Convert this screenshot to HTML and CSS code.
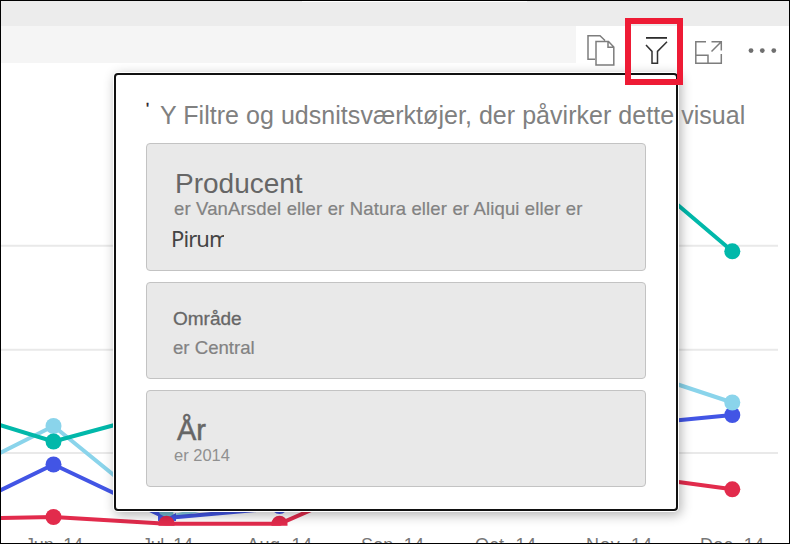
FILE: index.html
```
<!DOCTYPE html>
<html lang="da">
<head>
<meta charset="utf-8">
<title>Filtre</title>
<link rel="stylesheet" href="styles.css">
</head>
<body>
<div class="report">
  <div class="strip"><i></i></div>
  <header class="toolbar">
    <div class="title-area"></div>
    <svg class="icons" width="214" height="46" viewBox="576 26 214 46" fill="none">
      <g stroke="#7d7d7d" stroke-width="1.5">
        <path d="M595 59.3H588V35.7H600L605 40.500M596 41.500H608.500L613.800 47V65H596ZM608 41.500V47.300H613.800"/>
        <path d="M706 41.800H695.800V63.200H721.300V54M708 63V55.300H696M711.500 41.800H721.300V50.500M711.500 51.500L721 42"/>
      </g>
      <path stroke="#222" stroke-width="1.7" d="M646 37.900H667"/>
      <path stroke="#333" stroke-width="1.500" d="M646 45L652 51.400V63.200H657.500V51.400L667 41.800"/>
      <g fill="#6f6f6f"><circle cx="751" cy="50.600" r="2.400"/><circle cx="762.300" cy="50.600" r="2.400"/><circle cx="773.800" cy="50.600" r="2.400"/></g>
    </svg>
  </header>
  <svg class="chart" width="788" height="480" viewBox="1 63 788 480">
    <g stroke="#e9e9e9" stroke-width="2"><path d="M0 245.700H778M0 349.700H778M0 453H778"/></g>
    <g fill="none" stroke-width="4" stroke-linejoin="round">
      <path stroke="#8ad4eb" d="M0 453L53.500 426L166.500 518L280 490M619 365L732.300 402.500"/>
      <path stroke="#4255e5" d="M0 490.500L53.500 464.500L166.500 518L280 508M619 426L732.300 415"/>
      <path stroke="#01b8aa" d="M0 425L53.500 441.500L166.500 411M619 155L732.300 251.300"/>
      <path stroke="#e22b4c" d="M0 518L53.500 517L166.500 523.700H280L393 474M619 474L732.300 489.300"/>
    </g>
    <circle cx="732.300" cy="415" r="8" fill="#4255e5"/>
    <circle cx="53.500" cy="426" r="8" fill="#8ad4eb"/><circle cx="732.300" cy="402.500" r="8" fill="#8ad4eb"/>
    <circle cx="166.500" cy="513" r="7" fill="#72bed2"/>
    <path d="M158 513L167 518L176 513V521H158Z" fill="#4255e5"/>
    <circle cx="53.500" cy="464.500" r="8" fill="#4255e5"/><circle cx="279.500" cy="506" r="8" fill="#4255e5"/>
    <circle cx="53.500" cy="441.500" r="8" fill="#01b8aa"/><circle cx="732.300" cy="251.300" r="8" fill="#01b8aa"/>
    <g fill="#e22b4c"><circle cx="53.500" cy="517" r="8"/><path d="M158.500 525.700V523.700a8 8 0 0 1 16 0V525.700ZM271.500 525.700V523.700a8 8 0 0 1 16 0V525.700Z"/><circle cx="732.300" cy="489.300" r="8"/></g>
    <g class="months">
      <text x="25" y="551" textLength="58">Jun. 14</text>
      <text x="142" y="551" textLength="51">Jul. 14</text>
      <text x="247" y="551" textLength="65">Aug. 14</text>
      <text x="361" y="551" textLength="63">Sep. 14</text>
      <text x="475" y="551" textLength="61">Oct. 14</text>
      <text x="586" y="551" textLength="66">Nov. 14</text>
      <text x="700" y="551" textLength="64">Dec. 14</text>
    </g>
  </svg>
  <section class="popup">
    <h1><span class="tick">'</span><span class="heading">Y Filtre og udsnitsværktøjer, der påvirker dette visual</span></h1>
    <article class="card producer">
      <h2>Producent</h2>
      <p>er VanArsdel eller er Natura eller er Aliqui eller er</p>
      <div class="clipped">Pirum</div>
    </article>
    <article class="card region"><h2>Område</h2><p>er Central</p></article>
    <article class="card year"><h2>År</h2><p>er 2014</p></article>
  </section>
  <div class="highlight"></div>
</div>
</body>
</html>
```

FILE: styles.css
```
* { box-sizing: border-box; }
body { margin: 0; font-family: "Liberation Sans", Arial, sans-serif; overflow: hidden; }
h1, h2, p { margin: 0; font-weight: 400; white-space: nowrap; }
.report { position: relative; width: 790px; height: 544px; border: 1px solid #000; background: #fff; overflow: hidden; }
.strip { height: 25px; background: #ececec; }
.strip i { display: block; width: 225px; height: 1px; margin-left: 301px; background: #fff; }
.toolbar { display: flex; height: 37px; }
.title-area { flex: none; width: 575px; background: #f5f5f5; }
.icons { flex: none; display: block; }
.chart { display: block; }
.months { font-size: 18px; fill: #777; }
.popup {
  position: absolute; left: 113px; top: 72px; width: 564px; height: 438px;
  padding: 26px 30px; border: 2px solid #111; border-radius: 4px; background: #fff;
  box-shadow: 0 0 0 1px #fff, 2px 3px 12px 1px rgba(0,0,0,.3);
}
.popup h1 { display: flex; height: 42px; line-height: 29px; font-size: 25px; color: #808080; }
.tick { flex: none; width: 14px; font-size: 16px; line-height: 18px; color: #222; -webkit-text-stroke: .4px #222; }
.heading { flex: none; letter-spacing: .04px; }
.card { width: 500px; margin-bottom: 11px; border: 1px solid #c3c3c3; border-radius: 4px; background: #e9e9e9; color: #828282; }
.card h2 { color: #666; }
.producer { height: 128px; padding: 24px 0 0 28px; }
.producer h2 { font-size: 28px; line-height: 32px; }
.producer p { margin: -1px 0 0 -1px; font-size: 18.5px; letter-spacing: .15px; line-height: 20px; -webkit-text-stroke: .2px #828282; }
.clipped { width: 53px; margin: 4px 0 0 -4px; overflow: hidden; font: 22px/30px "Noto Sans", sans-serif; letter-spacing: -.9px; color: #444; }
.region { height: 97px; padding: 25px 0 0 26px; }
.region h2 { font-size: 19px; line-height: 22px; -webkit-text-stroke: .3px #666; }
.region p { margin-top: 7px; font-size: 18.6px; line-height: 22px; -webkit-text-stroke: .2px #828282; }
.year { height: 97px; padding: 23px 0 0 30px; }
.year h2 { font-size: 29px; line-height: 32px; -webkit-text-stroke: .5px #666; }
.year p { margin-left: -3px; font-size: 16.5px; line-height: 18px; color: #909090; }
.highlight { position: absolute; left: 624px; top: 17px; width: 58px; height: 67px; border: 6px solid #ee1b35; }
```
